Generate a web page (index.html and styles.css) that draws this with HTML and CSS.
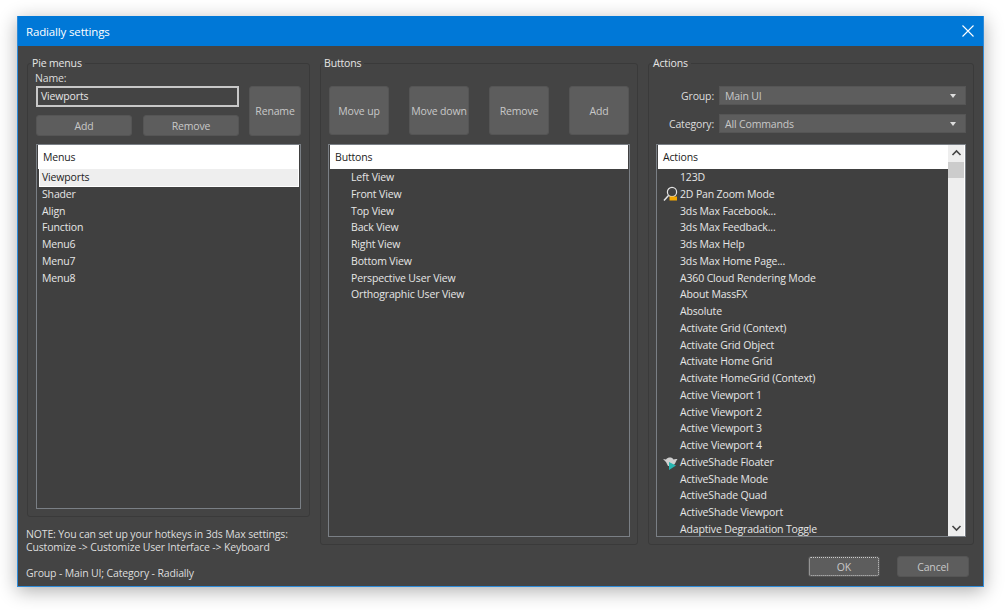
FILE: index.html
```html
<!DOCTYPE html>
<html lang="en">
<head>
<meta charset="utf-8">
<title>Radially settings</title>
<link rel="stylesheet" href="styles.css">
</head>
<body>
<div class="window">
  <header class="titlebar">
    <span>Radially settings</span>
    <svg class="close" width="12" height="12" viewBox="0 0 12 12"><path d="M.5.5l11 11M11.500.5l-11 11" stroke="#fff" stroke-width="1.1" fill="none"/></svg>
  </header>
  <main class="content">
    <div class="left-col">
      <fieldset class="group pie">
        <legend>Pie menus</legend>
        <div class="name-label">Name:</div>
        <div class="name-grid">
          <div class="input">Viewports</div>
          <div class="btn rename">Rename</div>
          <div class="btn">Add</div>
          <div class="btn remove">Remove</div>
        </div>
        <div class="list menus">
          <div class="list-head">Menus</div>
          <div class="rows">
            <div class="row selected">Viewports</div>
            <div class="row">Shader</div>
            <div class="row">Align</div>
            <div class="row">Function</div>
            <div class="row">Menu6</div>
            <div class="row">Menu7</div>
            <div class="row">Menu8</div>
          </div>
        </div>
      </fieldset>
      <div class="note">
        <p>NOTE: You can set up your hotkeys in 3ds Max settings:<br>Customize -&gt; Customize User Interface -&gt; Keyboard</p>
        <p>Group - Main UI; Category - Radially</p>
      </div>
    </div>
    <fieldset class="group buttons">
      <legend>Buttons</legend>
      <div class="toolbar">
        <div class="btn big">Move up</div>
        <div class="btn big">Move down</div>
        <div class="btn big">Remove</div>
        <div class="btn big">Add</div>
      </div>
      <div class="list fill">
        <div class="list-head">Buttons</div>
        <div class="rows indented">
          <div class="row">Left View</div>
          <div class="row">Front View</div>
          <div class="row">Top View</div>
          <div class="row">Back View</div>
          <div class="row">Right View</div>
          <div class="row">Bottom View</div>
          <div class="row">Perspective User View</div>
          <div class="row">Orthographic User View</div>
        </div>
      </div>
    </fieldset>
    <fieldset class="group actions">
      <legend>Actions</legend>
      <div class="field">
        <label>Group:</label>
        <div class="select">Main UI<i class="caret"></i></div>
      </div>
      <div class="field">
        <label>Category:</label>
        <div class="select">All Commands<i class="caret"></i></div>
      </div>
      <div class="list fill with-scroll">
        <div class="list-main">
          <div class="list-head">Actions</div>
          <div class="rows action-rows">
            <div class="row">123D</div>
            <div class="row"><svg class="icon" width="16" height="16" viewBox="0 0 16 16"><circle cx="9" cy="6" r="4.600" fill="none" stroke="#e4e4e4" stroke-width="1.200"/><path d="M5.500 9.500L1 14.500" stroke="#e4e4e4" stroke-width="1.500"/><path d="M6.500 10.500h7.500v4H6.500z" fill="#f5a800"/></svg>2D Pan Zoom Mode</div>
            <div class="row">3ds Max Facebook...</div>
            <div class="row">3ds Max Feedback...</div>
            <div class="row">3ds Max Help</div>
            <div class="row">3ds Max Home Page...</div>
            <div class="row">A360 Cloud Rendering Mode</div>
            <div class="row">About MassFX</div>
            <div class="row">Absolute</div>
            <div class="row">Activate Grid (Context)</div>
            <div class="row">Activate Grid Object</div>
            <div class="row">Activate Home Grid</div>
            <div class="row">Activate HomeGrid (Context)</div>
            <div class="row">Active Viewport 1</div>
            <div class="row">Active Viewport 2</div>
            <div class="row">Active Viewport 3</div>
            <div class="row">Active Viewport 4</div>
            <div class="row"><svg class="icon" width="16" height="16" viewBox="0 0 16 16"><path d="M0 5l3 .5C4 4 5.500 3.500 7 3.500S9.500 4 10.500 5.500L13 5h1.500l-1 1.500L12 9.500 10 12H5L3 8z" fill="#cfcfcf"/><path d="M6 8l7 3.500L6 16z" fill="#27b5b0"/></svg>ActiveShade Floater</div>
            <div class="row">ActiveShade Mode</div>
            <div class="row">ActiveShade Quad</div>
            <div class="row">ActiveShade Viewport</div>
            <div class="row">Adaptive Degradation Toggle</div>
          </div>
        </div>
        <div class="scrollbar">
          <svg class="arrow" width="17" height="17" viewBox="0 0 17 17"><path d="M4.500 10l4-4 4 4" fill="none" stroke="#444" stroke-width="1.600"/></svg>
          <div class="track"><div class="thumb"></div></div>
          <svg class="arrow" width="17" height="17" viewBox="0 0 17 17"><path d="M4.500 7l4 4 4-4" fill="none" stroke="#444" stroke-width="1.600"/></svg>
        </div>
      </div>
    </fieldset>
  </main>
  <footer class="footer">
    <div class="btn dlg focus">OK</div>
    <div class="btn dlg">Cancel</div>
  </footer>
</div>
</body>
</html>
```
FILE: styles.css
```css
* { box-sizing: border-box; }
html, body { margin: 0; height: 100%; background: #fff; overflow: hidden; }
body {
  padding: 16px 21px 23px 17px;
  font-family: "Open Sans", "Noto Sans", sans-serif;
  font-size: 10.5px;
  letter-spacing: -0.15px;
  color: #e6e6e6;
}
.window {
  height: 571px;
  display: flex;
  flex-direction: column;
  background: #444;
  border: 1px solid #2f8bd8;
  border-top: 0;
  box-shadow: 0 4px 18px rgba(0,0,0,.32);
}
.titlebar {
  height: 30px;
  flex: none;
  background: #0078d7;
  color: #fff;
  display: flex;
  align-items: center;
  justify-content: space-between;
  padding: 0 9px 0 8px;
  font-size: 11.5px;
}
.content {
  flex: 1;
  min-height: 0;
  display: grid;
  grid-template-columns: 283px 318px 326px;
  column-gap: 10px;
  padding: 10px 9px 0 9px;
}
.group {
  margin: 0;
  padding: 0 7px 7px;
  border: 1px solid #3a3a3a;
  border-radius: 3px;
  min-width: 0;
  display: flex;
  flex-direction: column;
  height: 489px;
}
.group legend {
  padding: 0 3px 0 0;
  margin-left: -3px;
  line-height: 14px;
  color: #e6e6e6;
}
.pie { height: 461px; padding: 0 8px 7px; }
.pie legend { margin-left: -4px; }
.buttons legend { margin-left: -4px; }
.name-label { line-height: 14px; margin: 1px 0 0 -1px; color: #ddd; }
.name-grid {
  display: grid;
  grid-template-columns: 96px 97px 52px;
  grid-template-rows: 21px 21px;
  column-gap: 10px;
  row-gap: 8px;
  margin-top: 1px;
}
.input {
  grid-column: 1 / 3;
  border: 2px solid #c8c8c8;
  line-height: 17px;
  padding-left: 3px;
  color: #e6e6e6;
}
.btn {
  background: #5d5d5d;
  border-radius: 3px;
  color: #c8c8c8;
  display: flex;
  align-items: center;
  justify-content: center;
  border: 1px solid #555;
}
.remove { justify-self: end; width: 96px; }
.rename { grid-column: 3; grid-row: 1 / 3; }
.list {
  margin-top: 8px;
  border: 1px solid #7a7f85;
  flex: 1;
  min-height: 0;
  display: flex;
  flex-direction: column;
  background: #404040;
  padding: 0 1px;
}
.list-head {
  height: 24px;
  flex: none;
  background: #fff;
  color: #1c1c1c;
  display: flex;
  align-items: center;
  padding-left: 5px;
}
.row {
  height: 16.76px;
  line-height: 16.76px;
  white-space: nowrap;
  position: relative;
  padding-left: 3px;
}
.menus .rows { padding-left: 2px; padding-right: 1px; }
.menus .row { padding-left: 2px; }
.menus .row.selected {
  background: #eee;
  color: #222;
  box-shadow: 0 0 0 1px #fff;
}
.indented .row { padding-left: 21px; }
.toolbar {
  display: flex;
  justify-content: space-between;
  padding: 16px 1px 0;
  height: 66px;
}
.big { width: 60px; height: 49px; }
.note { margin: 11px 0 0 -1px; line-height: 13px; color: #ddd; }
.note p { margin: 0 0 13px; }
.field {
  display: flex;
  align-items: center;
  justify-content: flex-end;
  gap: 5px;
  height: 19px;
  margin-bottom: 9px;
}
.field:first-of-type { margin-top: 16px; }
.field label { color: #ddd; }
.select {
  width: 247px;
  height: 19px;
  background: #5d5d5d;
  color: #c8c8c8;
  border: 1px solid #555;
  display: flex;
  align-items: center;
  justify-content: space-between;
  padding: 0 9px 0 5px;
}
.caret {
  width: 0;
  height: 0;
  border: 3.500px solid transparent;
  border-top: 4px solid #ddd;
  border-bottom: 0;
}
.with-scroll { flex-direction: row; padding: 0 0 0 1px; margin-top: 2px; }
.list-main { flex: 1; min-width: 0; display: flex; flex-direction: column; overflow: hidden; }
.action-rows .row { padding-left: 22px; }
.icon { position: absolute; left: 5px; top: 0; }
.scrollbar {
  width: 17px;
  flex: none;
  background: #eee;
  border-right: 1px solid #fff;
  display: flex;
  flex-direction: column;
}
.arrow { flex: none; }
.track { flex: 1; }
.thumb { height: 16px; background: #ccc; }
.footer {
  flex: none;
  display: flex;
  justify-content: flex-end;
  gap: 17px;
  padding: 0 14px 9px 0;
  height: 41px;
  align-items: flex-end;
}
.dlg { width: 72px; height: 21px; }
.focus { outline: 1px dotted #ccc; outline-offset: -2px; }
```
